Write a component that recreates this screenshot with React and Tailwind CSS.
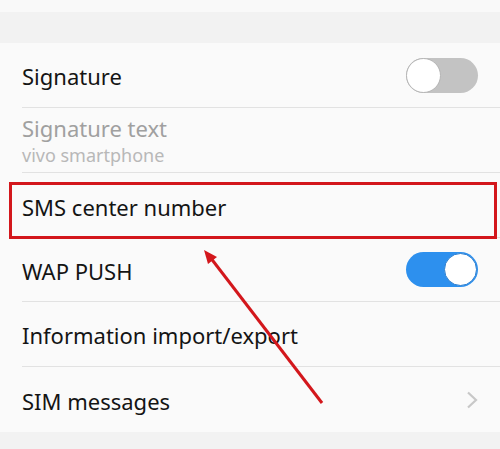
import React from "react";

function Toggle({ on }) {
  if (on) {
    return (
      <div className="w-[72px] h-[35px] rounded-full bg-[#2d90ee] flex items-center justify-end p-[1px]">
        <div className="w-[33px] h-[33px] rounded-full bg-white border border-[#2d7fd0]" />
      </div>
    );
  }
  return (
    <div className="w-[72px] h-[35px] rounded-full bg-[#c3c3c3] flex items-center justify-start">
      <div className="w-[35px] h-[35px] rounded-full bg-white border border-[#b5b5b5]" />
    </div>
  );
}

function Row({ h = "h-[65px]", divider = true, children, right }) {
  return (
    <div className={`${h} pl-[22px]`}>
      <div className={`h-full flex items-center justify-between pr-[22px] ${divider ? "border-b border-[#e2e2e2]" : ""}`}>
        <div className="flex flex-col">{children}</div>
        {right}
      </div>
    </div>
  );
}

export default function App() {
  return (
    <div
      className="relative w-[500px] h-[449px] bg-[#fafafa] overflow-hidden flex flex-col"
      style={{ fontFamily: "'Noto Sans', Roboto, sans-serif" }}
    >
      <div className="h-[12px] bg-[#f9f9f9]" />
      <div className="h-[31px] bg-[#f2f2f2]" />
      <Row right={<Toggle on={false} />}>
        <span className="text-[22px] leading-none text-[#141414] mt-[2px]">Signature</span>
      </Row>
      <Row>
        <span className="text-[22px] leading-none text-[#a0a0a0] mt-[1px]">Signature text</span>
        <span className="text-[18px] leading-none text-[#b8b8b8] mt-[7px]">vivo smartphone</span>
      </Row>
      <Row>
        <span className="text-[22px] leading-none text-[#141414] mt-[4px]">SMS center number</span>
      </Row>
      <Row h="h-[64px]" right={<Toggle on={true} />}>
        <span className="text-[22px] leading-none text-[#141414] mt-[2px]">WAP PUSH</span>
      </Row>
      <Row>
        <span className="text-[22px] leading-none text-[#141414] mt-[2px]">Information import/export</span>
      </Row>
      <Row
        divider={false}
        right={
          <svg width="12" height="18" viewBox="0 0 12 18">
            <polyline points="2,1.5 10,9 2,16.5" fill="none" stroke="#c8c8c8" strokeWidth="2.2" />
          </svg>
        }
      >
        <span className="text-[22px] leading-none text-[#141414] mt-[2px]">SIM messages</span>
      </Row>
      <div className="flex-1 bg-[#f2f2f2]" />

      <div className="absolute left-[9px] top-[182px] w-[488px] h-[57px] border-[3px] border-[#d3171c]" />
      <svg className="absolute left-0 top-0" width="500" height="449" viewBox="0 0 500 449">
        <line x1="322" y1="403" x2="210" y2="257" stroke="#d3171c" strokeWidth="3" />
        <polygon points="204,250 217,257 208,264" fill="#d3171c" />
      </svg>
    </div>
  );
}
